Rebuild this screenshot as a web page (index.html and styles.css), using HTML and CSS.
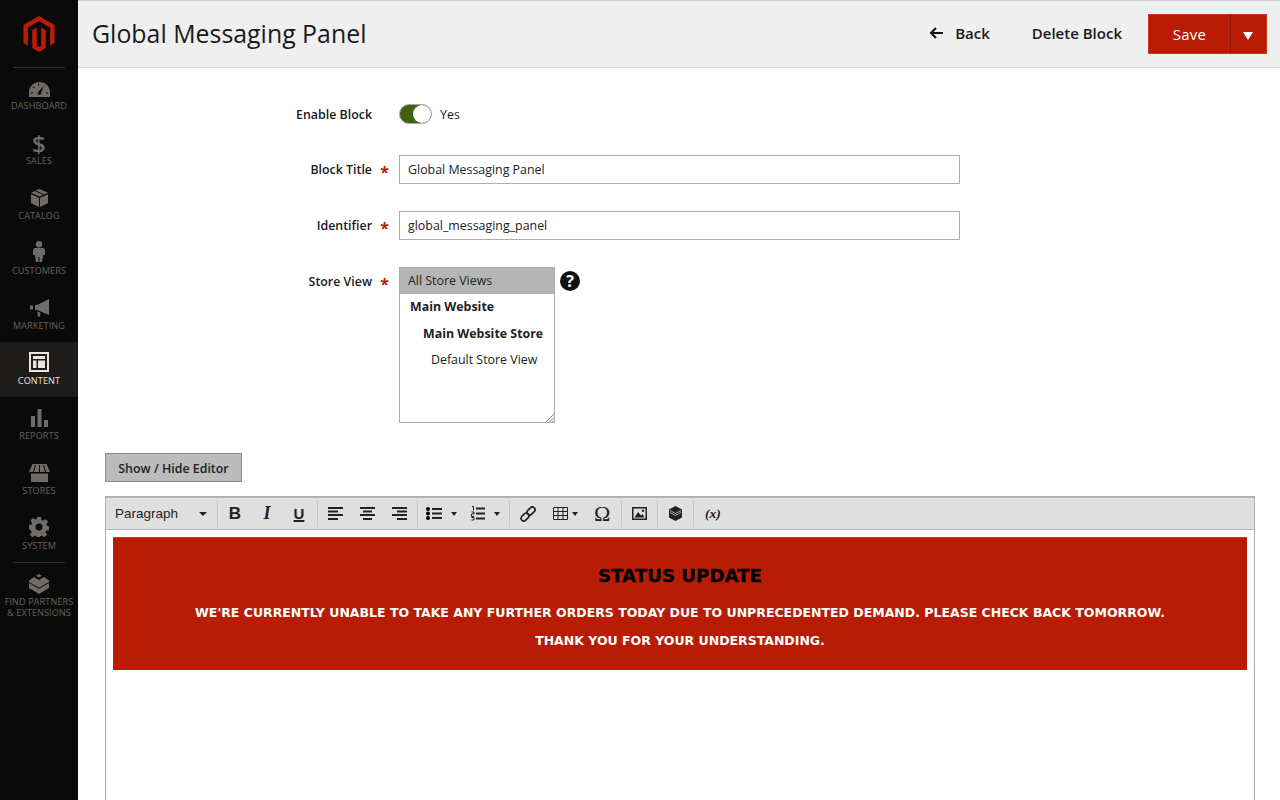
FILE: index.html
```html
<!DOCTYPE html>
<html lang="en">
<head>
<meta charset="utf-8">
<title>Global Messaging Panel</title>
<link rel="stylesheet" href="styles.css">
</head>
<body>
<div class="app">
  <nav class="sidebar">
    <div class="logo">
      <svg width="36" height="36" viewBox="0 0 24 24"><path fill="#b81c04" d="M12 0 1.600 6v12l3 1.700V7.700L12 3.400l7.400 4.300v12l3-1.700V6z"/><path fill="#b81c04" d="M13.500 19.700 12 20.600l-1.500-.9V7.700l-3 1.700v12L12 24l4.500-2.600v-12l-3-1.700z"/></svg>
    </div>
    <a class="nav-item first">
      <svg width="21" height="15" viewBox="0 0 21 15"><path fill="#6f6b66" d="M10.500 0C4.700 0 0 4.600 0 10.400V15h21v-4.600C21 4.600 16.300 0 10.500 0zM4 11.500H1.800v-1H4zm1.200-5L3.700 5l.7-.7L6 5.800zm4.800-3H9V1.300h1zm.5 9.500a1.800 1.800 0 0 1-1.500-2.800L15 3.500l-3 7.300a1.800 1.800 0 0 1-1.500 2.200zm8.700-1.500H17v-1h2.200z"/></svg>
      <span>DASHBOARD</span>
    </a>
    <a class="nav-item sales">
      <span class="glyph-dollar">$</span>
      <span>SALES</span>
    </a>
    <a class="nav-item">
      <svg width="17" height="18" viewBox="0 0 17 18"><path fill="#6f6b66" d="M8.500 0 17 3.800l-8.500 3.700L0 3.800zM0 5.300l8 3.500V18l-8-3.700zM17 5.300 9 8.800V18l8-3.700z"/><path stroke="#0a0a0a" stroke-width="1" fill="none" d="M4.500 2 12.500 5.500"/></svg>
      <span>CATALOG</span>
    </a>
    <a class="nav-item">
      <svg width="12" height="21" viewBox="0 0 12 21"><circle cx="6" cy="3.300" r="3.200" fill="#6f6b66"/><path fill="#6f6b66" d="M1.500 7h9L12 9v5h-1.800L9 21H6.500v-5h-1v5H3l-1.200-7H0V9z"/></svg>
      <span>CUSTOMERS</span>
    </a>
    <a class="nav-item">
      <svg width="19" height="18" viewBox="0 0 19 18"><path fill="#6f6b66" d="M19 0v16L7 11 5 11V6l2 0zM0 6.500h3v4H0zM7.500 12.500l3 1.300-.6 3.700H7.700z"/></svg>
      <span>MARKETING</span>
    </a>
    <a class="nav-item active">
      <svg width="20" height="20" viewBox="0 0 20 20"><path fill="#e8e4df" fill-rule="evenodd" d="M0 0h20v20H0zM2 2v16h16V2z"/><path fill="#e8e4df" d="M4 4h12v3H4zM4 8.500h3.500V16H4zM9 8.500h7V16H9z"/></svg>
      <span>CONTENT</span>
    </a>
    <a class="nav-item">
      <svg width="17" height="18" viewBox="0 0 17 18"><path fill="#6f6b66" d="M0 7h4v11H0zM6.500 0h4v18h-4zM13 11h4v7h-4z"/></svg>
      <span>REPORTS</span>
    </a>
    <a class="nav-item">
      <svg width="21" height="18" viewBox="0 0 21 18"><path fill="#6f6b66" d="M2 9.500h17V18H2zM3.500 0h14l3.500 8H0z"/><path stroke="#0a0a0a" stroke-width="1" d="M6.500 1 4.500 8M10.500 1v7M14.500 1l2 7"/></svg>
      <span>STORES</span>
    </a>
    <a class="nav-item">
      <svg width="20" height="20" viewBox="0 0 20 20"><path fill="#6f6b66" fill-rule="evenodd" d="M8 0h4l.5 3 1.600.7 2.500-1.800 2.500 2.800-1.800 2.500.7 1.600 2 .4v4l-3 .5-.7 1.600 1.800 2.500-2.800 2.500-2.500-1.800-1.600.7-.5 3H8l-.5-3-1.600-.7-2.500 1.800-2.500-2.800 1.800-2.500-.7-1.600L0 12V8l2.500-.5.700-1.600L1.400 3.400l2.800-2.500 2.500 1.800 1-.7zm2 6.500a3.500 3.500 0 1 0 0 7 3.500 3.500 0 0 0 0-7z"/></svg>
      <span>SYSTEM</span>
    </a>
    <a class="nav-item partners">
      <svg width="20" height="20" viewBox="0 0 20 20"><path fill="#6f6b66" d="M10 0l3 1.700L10 3.500 7 1.700zM5 3l5 3 5-3 5 3.500V14l-10 6L0 14V6.500z"/><path fill="#0a0a0a" d="M0 8l10 5.800L20 8v1L10 14.800 0 9z"/></svg>
      <span>FIND PARTNERS<br>&amp; EXTENSIONS</span>
    </a>
  </nav>

  <div class="main">
    <header class="page-header">
      <h1 class="page-title">Global Messaging Panel</h1>
      <div class="actions">
        <a class="act back"><svg class="back-arrow" width="14" height="12" viewBox="0 0 14 12"><path fill="none" stroke="#111" stroke-width="2" d="M14 6H2M7 1 2 6l5 5"/></svg>Back</a>
        <a class="act">Delete Block</a>
        <div class="save-group">
          <button class="save-btn">Save</button>
          <button class="save-toggle"><i class="tri"></i></button>
        </div>
      </div>
    </header>

    <div class="content">
      <form class="form">
        <div class="field toggle-row">
          <div class="label">Enable Block</div>
          <div class="control">
            <span class="switch"><span class="knob"></span></span>
            <span class="yes">Yes</span>
          </div>
        </div>
        <div class="field title-row">
          <div class="label req">Block Title</div>
          <div class="control"><div class="input">Global Messaging Panel</div></div>
        </div>
        <div class="field id-row">
          <div class="label req">Identifier</div>
          <div class="control"><div class="input">global_messaging_panel</div></div>
        </div>
        <div class="field store-row">
          <div class="label req">Store View</div>
          <div class="control store-control">
            <div class="listbox">
              <div class="opt selected">All Store Views</div>
              <div class="opt group">Main Website</div>
              <div class="opt group sub">Main Website Store</div>
              <div class="opt leaf">Default Store View</div>
              <svg class="grip" width="8" height="8" viewBox="0 0 8 8"><path stroke="#777" fill="none" d="M8 0 0 8M8 3.500 3.500 8M8 6.500 6.500 8"/></svg>
            </div>
            <span class="help">?</span>
          </div>
        </div>
      </form>

      <button class="toggle-editor">Show / Hide Editor</button>

      <div class="editor">
        <div class="toolbar">
          <div class="tb-group format"><span>Paragraph</span><i class="caret"></i></div>
          <div class="tb-group three">
            <span class="tb tb-b">B</span>
            <span class="tb tb-i">I</span>
            <span class="tb tb-u">U</span>
          </div>
          <div class="tb-group three">
            <span class="tb"><svg width="15" height="13" viewBox="0 0 15 13"><path stroke="#222" stroke-width="2" d="M0 1h15M0 4.500h10M0 8h15M0 12h10"/></svg></span>
            <span class="tb"><svg width="15" height="13" viewBox="0 0 15 13"><path stroke="#222" stroke-width="2" d="M0 1h15M3 4.500h9M0 8h15M3 12h9"/></svg></span>
            <span class="tb"><svg width="15" height="13" viewBox="0 0 15 13"><path stroke="#222" stroke-width="2" d="M0 1h15M5 4.500h10M0 8h15M5 12h10"/></svg></span>
          </div>
          <div class="tb-group lists">
            <span class="tb-list"><svg width="16" height="13" viewBox="0 0 16 13"><circle cx="2" cy="2" r="2"/><circle cx="2" cy="6.500" r="2"/><circle cx="2" cy="11" r="2"/><path stroke="#222" stroke-width="2" d="M6 2h10M6 6.500h10M6 11h10"/></svg><i class="caret"></i></span>
            <span class="tb-list"><svg width="14" height="15" viewBox="0 0 14 15"><path stroke="#222" stroke-width="1" fill="none" d="M1 .5h1.500v4M.5 6h2.500v2H.5V10.500H3M.5 11.500H3V14H.5"/><path stroke="#222" stroke-width="2" d="M5 2.500h9M5 7.500h9M5 12.500h9"/></svg><i class="caret"></i></span>
          </div>
          <div class="tb-group rest">
            <span class="tb-link"><svg width="16" height="16" viewBox="0 0 16 16"><g fill="none" stroke="#222" stroke-width="1.700"><rect x="8.250" y=".500" width="5.500" height="9" rx="2.700" transform="rotate(45 11 5)"/><rect x="2.250" y="6.500" width="5.500" height="9" rx="2.700" transform="rotate(45 5 11)"/></g></svg></span>
            <span class="tb-table"><svg width="15" height="13" viewBox="0 0 15 13"><path fill="none" stroke="#222" d="M.5.500h14v12H.500zM.5 4.500h14M.5 8.500h14M5 .5v12M10 .5v12"/></svg><i class="caret"></i></span>
            <span class="tb-omega">Ω</span>
          </div>
          <div class="tb-group single">
            <svg width="15" height="13" viewBox="0 0 15 13"><path fill="#222" fill-rule="evenodd" d="M0 0h15v13H0zM1.500 1.500v10h12v-10z"/><path fill="#222" d="M2.500 10.500 6 5l3 3.500 1.500-1.500 2 3.500z"/><circle cx="11" cy="3.800" r="1.200" fill="#222"/></svg>
          </div>
          <div class="tb-group single">
            <svg width="13" height="15" viewBox="0 0 13 15"><path fill="#222" d="M6.500 0 13 3.500v8L6.500 15 0 11.500v-8z"/><path stroke="#ddd" stroke-width=".7" fill="none" d="M1 4.500l5.500 3 5.500-3M1 6.500l5.500 3 5.500-3"/></svg>
          </div>
          <div class="tb-group var"><span>(x)</span></div>
        </div>
        <div class="editor-body">
          <div class="banner">
            <h2 class="banner-title">STATUS UPDATE</h2>
            <p class="banner-text">WE'RE CURRENTLY UNABLE TO TAKE ANY FURTHER ORDERS TODAY DUE TO UNPRECEDENTED DEMAND. PLEASE CHECK BACK TOMORROW.</p>
            <p class="banner-text">THANK YOU FOR YOUR UNDERSTANDING.</p>
          </div>
        </div>
      </div>
    </div>
  </div>
</div>
</body>
</html>
```
FILE: styles.css
```css
* { box-sizing: border-box; }
html, body { margin: 0; padding: 0; height: 800px; overflow: hidden; background: #fff; }
body { font-family: "Open Sans", sans-serif; color: #222; font-size: 14px; }
.app { display: flex; width: 1280px; height: 800px; }

.sidebar { width: 78px; flex: none; background: #0a0a0a; height: 800px; }
.logo { height: 68px; padding-top: 16px; display: flex; justify-content: center; position: relative; }
.logo::after, .partners::before { content: ""; position: absolute; left: 13px; width: 52px; height: 1px; background: #33302d; }
.logo::after { top: 67px; }
.nav-item { height: 55px; display: flex; flex-direction: column; align-items: center; justify-content: flex-end; padding-bottom: 10px; gap: 3px; color: #66625d; font-size: 9.100px; line-height: 12px; text-align: center; position: relative; letter-spacing: .1px; }
.nav-item.first { height: 54px; }
.nav-item.active { background: #1e1c1a; color: #e8e4df; }
.partners { height: 66px; justify-content: flex-start; padding-top: 12px; padding-bottom: 0; gap: 2px; }
.partners::before { top: 0; }
.partners span { line-height: 11px; }
.sales { gap: 0; }
.glyph-dollar { font-size: 24px; line-height: 22px; font-weight: 600; color: #6f6b66; }

.main { flex: 1; min-width: 0; }
.page-header { height: 68px; background: #efefef; border-top: 1px solid #ccc; border-bottom: 1px solid #d6d6d6; display: flex; align-items: center; justify-content: space-between; padding: 0 13px 0 14px; }
.page-title { margin: 0 0 2px; font-size: 24.900px; font-weight: 400; color: #1a1a1a; line-height: 36px; }
.actions { display: flex; align-items: center; }
.act { font-size: 15px; font-weight: 600; color: #1a1a1a; display: flex; align-items: center; margin-bottom: 2px; }
.back { margin-right: 42px; }
.back-arrow { margin-right: 12px; }
.save-group { display: flex; margin-left: 26px; }
.save-btn, .save-toggle { height: 40px; background: #b81c04; border: 1px solid #c9391c; color: #fff; font-family: inherit; padding: 0; margin: 0; }
.save-btn { width: 82px; font-size: 15px; font-weight: 500; letter-spacing: .3px; border-right: 0; padding-bottom: 1px; }
.save-toggle { width: 37px; border-left: 1px solid #8f1703; display: flex; align-items: center; justify-content: center; }
.tri { display: block; width: 0; height: 0; border-left: 5.500px solid transparent; border-right: 5.500px solid transparent; border-top: 8px solid #fff; margin: 3px 2px 0 0; }

.content { padding: 0 25px 0 27px; }
.form { padding-top: 33px; }
.field { display: flex; }
.label { width: 294px; text-align: right; font-size: 12.400px; font-weight: 600; color: #1a1a1a; padding-right: 27px; position: relative; line-height: 28px; flex: none; }
.req { line-height: 30px; }
.label.req::after { content: "*"; position: absolute; right: 10px; top: 2px; color: #b81c04; font-size: 16px; font-weight: 700; }
.control { flex: none; }
.toggle-row { height: 27px; margin-bottom: 27px; }
.toggle-row .control { display: flex; align-items: center; height: 26px; }
.switch { width: 33px; height: 20px; border-radius: 10px; background: #3f6212; border: 1px solid #aaa; position: relative; display: block; }
.knob { position: absolute; right: 0; top: 0; width: 18px; height: 18px; border-radius: 50%; background: #fff; }
.yes { margin-left: 8px; font-size: 12.400px; }
.title-row { margin-bottom: 27px; height: 29px; align-items: flex-start; }
.id-row { margin-bottom: 27px; height: 29px; align-items: flex-start; }
.input { width: 561px; height: 29px; border: 1px solid #adadad; padding: 0 8px; font-size: 12.400px; line-height: 28px; color: #222; background: #fff; }
.store-row { align-items: flex-start; }
.store-control { display: flex; align-items: flex-start; }
.listbox { width: 156px; height: 156px; border: 1px solid #adadad; position: relative; font-size: 12.400px; background: #fff; }
.opt { line-height: 26.700px; height: 26.700px; white-space: nowrap; color: #222; }
.selected { background: #b5b5b5; padding-left: 8px; height: 26px; line-height: 26px; }
.group { font-weight: 700; padding-left: 10px; }
.sub { padding-left: 23px; }
.leaf { padding-left: 31px; }
.grip { position: absolute; right: 0; bottom: 0; }
.help { width: 20px; height: 20px; border-radius: 50%; background: #111; color: #fff; font-size: 16px; font-weight: 700; text-align: center; line-height: 20px; margin: 4px 0 0 5px; }

.toggle-editor { display: block; margin-top: 30px; width: 137px; height: 29px; background: #bbb; border: 1px solid #8a8a8a; font-family: inherit; font-size: 12.400px; font-weight: 600; color: #222; padding: 2px 0 0; }

.editor { margin-top: 14px; width: 1150px; height: 320px; border: 1px solid #adadad; border-bottom: 0; }
.toolbar { height: 33px; background: #dfdfdf; border-top: 1px solid #b8b8b8; border-bottom: 1px solid #b8b8b8; display: flex; align-items: center; }
.tb-group { height: 26px; display: flex; align-items: center; border-right: 1px solid #c6c6c6; flex: none; }
.format { width: 112px; padding-left: 9px; font-family: "Liberation Sans", sans-serif; font-size: 13.500px; color: #222; justify-content: space-between; padding-right: 10px; }
.caret { display: block; width: 0; height: 0; border-left: 3.500px solid transparent; border-right: 3.500px solid transparent; border-top: 4px solid #222; }
.format .caret { border-left-width: 4px; border-right-width: 4px; }
.three { width: 100px; padding-left: 1px; }
.tb { width: 32px; display: flex; justify-content: center; align-items: center; color: #222; font-family: "Liberation Sans", sans-serif; font-size: 17px; }
.tb-b { font-weight: 700; }
.tb-i { font-style: italic; font-weight: 700; font-family: "Liberation Serif", serif; font-size: 18px; }
.tb-u { text-decoration: underline; text-decoration-thickness: 2px; font-size: 15px; font-weight: 700; }
.lists { width: 92px; padding-left: 8px; }
.tb-list { display: flex; align-items: center; gap: 9px; width: 45px; flex: none; }
.tb-list:last-child { width: 37px; }
.rest { width: 112px; padding-left: 10px; }
.tb-link { width: 33px; display: flex; }
.tb-table { display: flex; align-items: center; gap: 4px; width: 41px; }
.tb-omega { font-family: "Liberation Serif", serif; font-size: 22px; color: #222; }
.single { width: 36px; justify-content: center; }
.var { border-right: 0; padding-left: 11px; font-family: "Liberation Serif", serif; font-style: italic; font-weight: 700; font-size: 13.500px; }
.editor-body { padding: 7px; }
.banner { height: 133px; background: #b81c04; text-align: center; border-top: 1px solid #c9391c; }
.banner-title { margin: 0; padding-top: 27px; font-family: "DejaVu Sans", sans-serif; font-size: 18.200px; line-height: 22px; font-weight: 700; color: #000; -webkit-text-stroke: .3px #000; }
.banner-text { margin: 0; font-family: "DejaVu Sans", sans-serif; font-weight: 700; font-size: 12.500px; color: #fff; line-height: 28px; }
.banner-title + .banner-text { margin-top: 12px; }
```
